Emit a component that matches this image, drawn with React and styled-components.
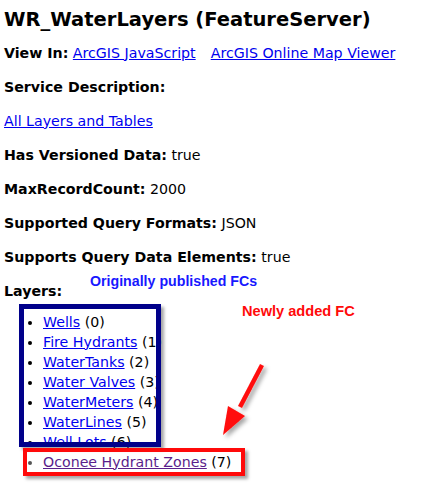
import React from 'react'
import styled, { createGlobalStyle } from 'styled-components'

const GlobalStyle = createGlobalStyle`
    body {
        margin: 0;
        background: #fff;
        font-family: "DejaVu Sans", Verdana, sans-serif;
        font-size: 14.2px;
        color: #000;
    }
`

const layers = [
    { name: "Wells", id: 0 },
    { name: "Fire Hydrants", id: 1 },
    { name: "WaterTanks", id: 2 },
    { name: "Water Valves", id: 3 },
    { name: "WaterMeters", id: 4 },
    { name: "WaterLines", id: 5 },
    { name: "Well Lots", id: 6 },
    { name: "Oconee Hydrant Zones", id: 7, visited: true },
]

function App() {
    return (
        <Page>
            <GlobalStyle />
            <Title>WR_WaterLayers (FeatureServer)</Title>
            <Fields>
                <Field>
                    <b>View In:</b> <Link href="#">ArcGIS JavaScript</Link>
                    <Gap />
                    <Link href="#">ArcGIS Online Map Viewer</Link>
                </Field>
                <Field><b>Service Description:</b></Field>
                <Field><Link href="#">All Layers and Tables</Link></Field>
                <Field><b>Has Versioned Data:</b> true</Field>
                <Field><b>MaxRecordCount:</b> 2000</Field>
                <Field><b>Supported Query Formats:</b> JSON</Field>
                <Field><b>Supports Query Data Elements:</b> true</Field>
                <Field><b>Layers:</b></Field>
            </Fields>
            <LayerList>
                {layers.map((layer) => (
                    <LayerItem key={layer.id} $visited={layer.visited}>
                        <Link href="#" $visited={layer.visited}>{layer.name}</Link> ({layer.id})
                    </LayerItem>
                ))}
            </LayerList>

            <Note $color="#1818ff" $size={14.2} $left={90} $top={274}>Originally published FCs</Note>
            <Note $color="#ff0a0a" $size={14.6} $left={242} $top={304}>Newly added FC</Note>
            <Frame $color="#00008a" $width={5} $left={19} $top={304} $w={142} $h={143} />
            <Frame $color="#ff0a0a" $width={4} $left={23} $top={448} $w={222} $h={28} />
            <Arrow width="60" height="90" viewBox="0 0 60 90">
                <defs>
                    <filter id="shadow" x="-30%" y="-30%" width="160%" height="160%">
                        <feDropShadow dx="3" dy="3" stdDeviation="2" floodColor="#000" floodOpacity="0.35" />
                    </filter>
                </defs>
                <g filter="url(#shadow)" fill="#ff0a0a">
                    <line x1="52" y1="6" x2="30" y2="48" stroke="#ff0a0a" strokeWidth="4.5" />
                    <polygon points="18,47 35,57 13,76" />
                </g>
            </Arrow>
        </Page>
    )
}

const Page = styled.div`
    position: relative;
    height: 488px;
    box-sizing: border-box;
    padding: 8px 4px 0;
`

const Title = styled.h2`
    margin: 0 0 12.5px;
    font-size: 19.5px;
    line-height: 24px;
    font-weight: bold;
`

const Fields = styled.div`
    display: flex;
    flex-direction: column;
    gap: 18px;
`

const Field = styled.div`
    line-height: 16px;
    white-space: nowrap;
`

const Gap = styled.span`
    display: inline-block;
    width: 15px;
`

const Link = styled.a`
    color: ${(p) => (p.$visited ? "#5a1e8c" : "#0000ee")};
    text-decoration: underline;
`

const LayerList = styled.ul`
    margin: 13px 0 0;
    padding-left: 39px;
    line-height: 20px;
`

const LayerItem = styled.li`
    list-style: disc;
    &::marker {
        color: ${(p) => (p.$visited ? "#555" : "#000")};
    }
`

const Note = styled.div`
    position: absolute;
    left: ${(p) => p.$left}px;
    top: ${(p) => p.$top}px;
    font-family: "Liberation Sans", Arial, sans-serif;
    font-weight: bold;
    font-size: ${(p) => p.$size}px;
    line-height: 15px;
    color: ${(p) => p.$color};
    white-space: nowrap;
`

const Frame = styled.div`
    position: absolute;
    left: ${(p) => p.$left}px;
    top: ${(p) => p.$top}px;
    width: ${(p) => p.$w}px;
    height: ${(p) => p.$h}px;
    box-sizing: border-box;
    border: ${(p) => p.$width}px solid ${(p) => p.$color};
    box-shadow: 3px 3px 3px rgba(0, 0, 0, 0.35);
`

const Arrow = styled.svg`
    position: absolute;
    left: 210px;
    top: 359px;
    overflow: visible;
`

export default App
